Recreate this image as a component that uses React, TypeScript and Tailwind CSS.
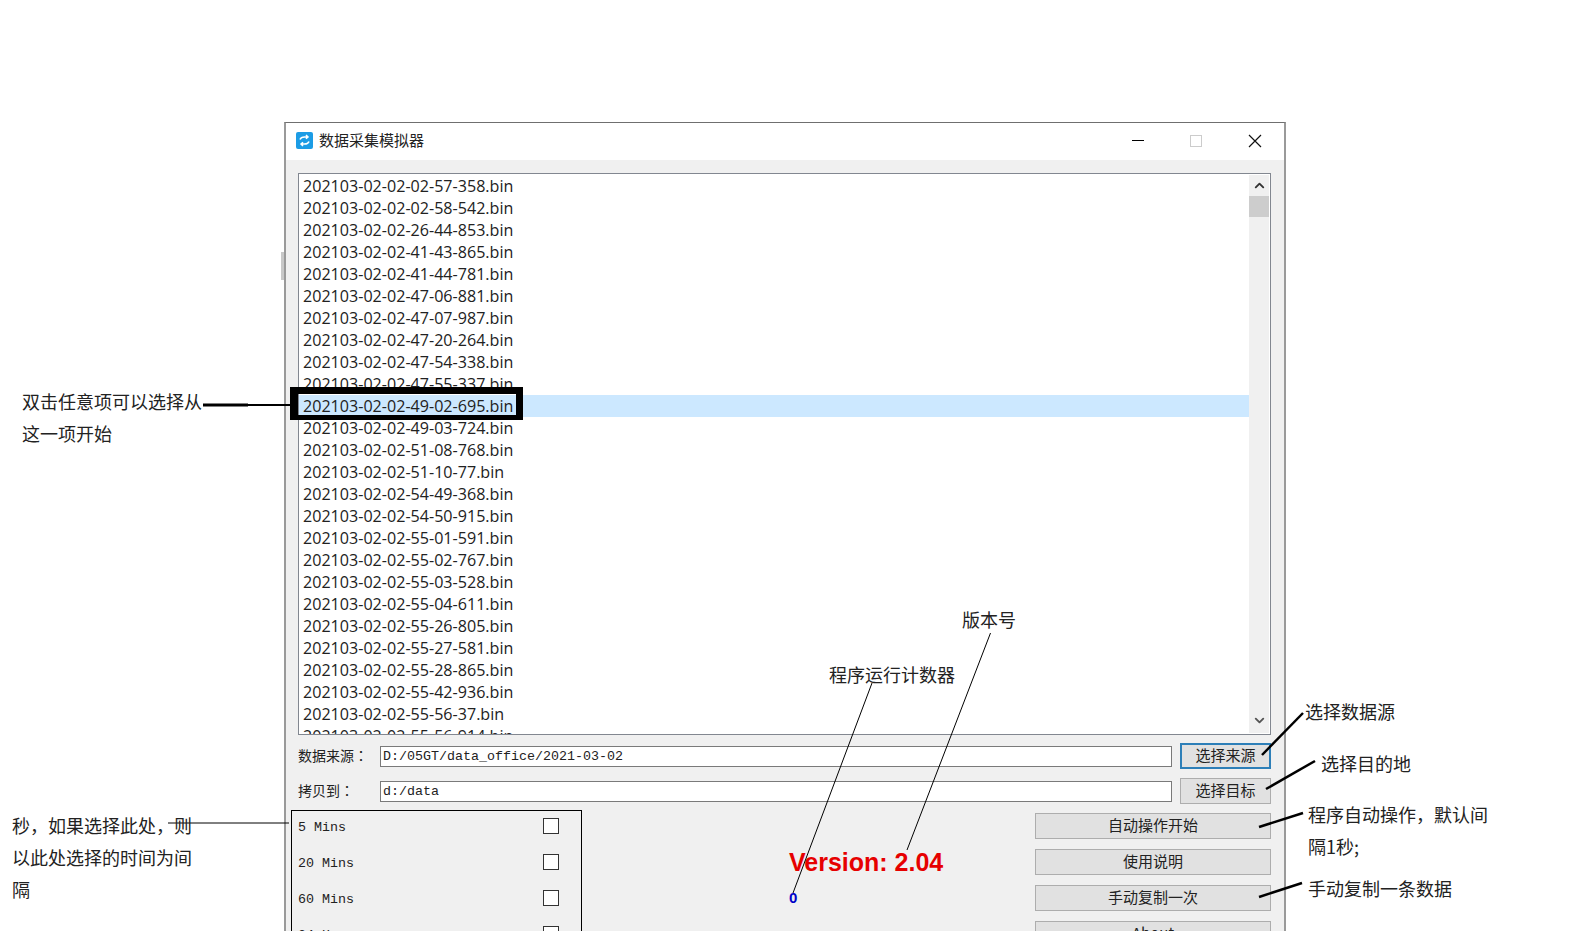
import { ChevronDown, ChevronUp } from "lucide-react";

const files = [
  "202103-02-02-02-57-358.bin",
  "202103-02-02-02-58-542.bin",
  "202103-02-02-26-44-853.bin",
  "202103-02-02-41-43-865.bin",
  "202103-02-02-41-44-781.bin",
  "202103-02-02-47-06-881.bin",
  "202103-02-02-47-07-987.bin",
  "202103-02-02-47-20-264.bin",
  "202103-02-02-47-54-338.bin",
  "202103-02-02-47-55-337.bin",
  "202103-02-02-49-02-695.bin",
  "202103-02-02-49-03-724.bin",
  "202103-02-02-51-08-768.bin",
  "202103-02-02-51-10-77.bin",
  "202103-02-02-54-49-368.bin",
  "202103-02-02-54-50-915.bin",
  "202103-02-02-55-01-591.bin",
  "202103-02-02-55-02-767.bin",
  "202103-02-02-55-03-528.bin",
  "202103-02-02-55-04-611.bin",
  "202103-02-02-55-26-805.bin",
  "202103-02-02-55-27-581.bin",
  "202103-02-02-55-28-865.bin",
  "202103-02-02-55-42-936.bin",
  "202103-02-02-55-56-37.bin",
  "202103-02-02-55-56-914.bin",
];

const cjk = "font-['Noto_Sans_CJK_SC',sans-serif]";
const mono = "font-['Liberation_Mono','Noto_Sans_CJK_SC',monospace]";

function Note({ className, children }: { className: string; children: string }) {
  return (
    <span
      className={`absolute text-[18px] leading-[24px] whitespace-nowrap text-[#222] ${cjk} ${className}`}
    >
      {children}
    </span>
  );
}

function PathRow({ label, value, top }: { label: string; value: string; top: string }) {
  return (
    <div className={`flex items-center h-[21px] ${top}`}>
      <span className="w-[82px] pb-[2px] text-[14px] text-[#222] font-['Noto_Sans_CJK_TC',sans-serif]">{label}</span>
      <div
        className={`w-[792px] h-[21px] bg-white border border-[#7a7a7a] pl-[2px] text-[13.33px] leading-[19px] text-[#222] ${mono}`}
      >
        {value}
      </div>
    </div>
  );
}

function Button({ label, className }: { label: string; className: string }) {
  return (
    <button
      className={`flex items-center justify-center pb-[1px] bg-[#e1e1e1] border border-[#adadad] text-[15px] text-[#222] ${cjk} ${className}`}
    >
      {label}
    </button>
  );
}

function Interval({ label }: { label: string }) {
  return (
    <div className="flex items-center justify-between h-[36px] pl-[5px] pr-[22px] shrink-0">
      <span className={`text-[13.33px] text-[#222] ${mono}`}>{label}</span>
      <span className="w-[16px] h-[16px] mb-[4px] bg-white border border-[#333]" />
    </div>
  );
}

export default function App() {
  return (
    <div className="relative h-[931px] overflow-hidden bg-white pt-[122px] pl-[284px]">
      {/* window */}
      <div className="w-[1002px] h-[809px] border-x-2 border-t border-x-[#9a9a9a] border-t-[#6f6f6f] bg-[#f0f0f0]">
        <div className="h-[37px] bg-white flex items-center pl-[10px] pb-[2px]">
          <svg width="17" height="17" viewBox="0 0 17 17" aria-hidden="true">
            <rect width="17" height="17" rx="2" fill="#1c9ce5" />
            <path d="M4 7.5c.6-1.8 2-2.6 4.5-2.6h3M10 3l2 1.9-2 1.9M13 9.5c-.6 1.8-2 2.6-4.5 2.6h-3M7 14l-2-1.9 2-1.9" fill="none" stroke="#fff" strokeWidth="1.5" />
          </svg>
          <span className={`ml-[6px] text-[15px] text-[#222] ${cjk}`}>数据采集模拟器</span>
          <div className="ml-auto flex items-center">
            <span className="w-[12px] h-[1px] bg-black" />
            <span className="ml-[46px] w-[12px] h-[12px] border border-[#ccc]" />
            <svg className="ml-[46px] mr-[22px]" width="14" height="14" viewBox="0 0 14 14" aria-hidden="true">
              <path d="M1 1l12 12M13 1L1 13" stroke="#111" strokeWidth="1.2" />
            </svg>
          </div>
        </div>

        <div className="pl-[12px] pt-[13px]">
          {/* file list */}
          <div className="relative w-[973px] h-[562px] bg-white border border-[#828790] overflow-hidden pt-[1px]">
            {files.map((f) => (
              <div
                key={f}
                className={`h-[22px] w-[950px] pl-[4px] text-[16.1px] leading-[22px] text-[#222] font-['Open_Sans',sans-serif] ${f.includes("49-02-695") ? "bg-[#cce8ff]" : ""}`}
              >
                {f}
              </div>
            ))}
            <div className="absolute top-[1px] right-[1px] bottom-[1px] w-[20px] bg-[#f0f0f0] flex flex-col items-center">
              <ChevronUp className="h-[21px] w-[15px] text-[#333] shrink-0" strokeWidth={3} />
              <div className="h-[21px] w-full bg-[#cdcdcd]" />
              <ChevronDown className="mt-auto mb-[2px] h-[21px] w-[15px] text-[#555] shrink-0" strokeWidth={3} />
            </div>
          </div>

          {/* paths */}
          <div className="flex mt-[8px] w-[973px]">
            <div className="flex flex-col pt-[3px]">
              <PathRow label="数据来源：" value="D:/05GT/data_office/2021-03-02" top="" />
              <PathRow label="拷贝到：" value="d:/data" top="mt-[14px]" />
            </div>
            <div className="ml-auto flex flex-col">
              <Button label="选择来源" className="w-[91px] h-[26px] !border-2 !border-[#2d7fb8]" />
              <Button label="选择目标" className="w-[91px] h-[26px] mt-[9px]" />
            </div>
          </div>

          <div className="flex w-[973px] mt-[6px]">
            {/* interval group */}
            <div className="-ml-[7px] w-[291px] h-[200px] border border-black flex flex-col overflow-hidden shrink-0">
              <div className="-mt-[1px] pl-[1px]">
                <Interval label="5 Mins" />
                <Interval label="20 Mins" />
                <Interval label="60 Mins" />
                <Interval label="24 Hours" />
              </div>
            </div>
            <div className="ml-[207px] flex flex-col pt-[36px]">
              <span className="text-[25px] leading-[32px] font-bold text-[#e60000] whitespace-nowrap font-['Liberation_Sans',sans-serif]">
                Version: 2.04
              </span>
              <span className="mt-[11px] text-[15px] leading-[17px] font-bold text-[#0000c8] font-['Liberation_Sans',sans-serif]">
                0
              </span>
            </div>
            <div className="ml-auto flex flex-col gap-[10px] pt-[3px]">
              <Button label="自动操作开始" className="w-[236px] h-[26px]" />
              <Button label="使用说明" className="w-[236px] h-[26px]" />
              <Button label="手动复制一次" className="w-[236px] h-[26px]" />
              <Button label="About" className="w-[236px] h-[26px]" />
            </div>
          </div>
        </div>
      </div>

      {/* callouts over the window */}
      <div className="absolute inset-0 pointer-events-none">
        <div className="absolute left-[281px] top-[252px] w-[3px] h-[28px] bg-[#c8c8c8]" />
        <div className="absolute left-[290px] top-[387px] w-[233px] h-[33px] border-t-[7px] border-b-[5px] border-l-[8px] border-r-[7px] border-black" />
        <svg className="absolute inset-0" width="1570" height="931" aria-hidden="true">
          <path d="M203 405H248" stroke="#000" strokeWidth="3" />
          <path d="M248 405H291" stroke="#000" strokeWidth="2" />
          <path d="M168 823H289" stroke="#000" strokeWidth="1" />
          <path d="M872 683L793 893" stroke="#000" strokeWidth="1" />
          <path d="M990.5 633L907 850" stroke="#000" strokeWidth="1" />
          <path d="M1303 713L1262 755" stroke="#000" strokeWidth="2.5" />
          <path d="M1315 761L1266 789" stroke="#000" strokeWidth="2.5" />
          <path d="M1303 813L1259 827" stroke="#000" strokeWidth="2.5" />
          <path d="M1302 883L1259 897" stroke="#000" strokeWidth="2.5" />
        </svg>
        <Note className="left-[22px] top-[389px]">双击任意项可以选择从</Note>
        <Note className="left-[22px] top-[421px]">这一项开始</Note>
        <Note className="left-[12px] top-[813px]">秒，如果选择此处，则</Note>
        <Note className="left-[12px] top-[845px]">以此处选择的时间为间</Note>
        <Note className="left-[12px] top-[877px]">隔</Note>
        <Note className="left-[962px] top-[607px]">版本号</Note>
        <Note className="left-[829px] top-[662px]">程序运行计数器</Note>
        <Note className="left-[1305px] top-[699px]">选择数据源</Note>
        <Note className="left-[1321px] top-[751px]">选择目的地</Note>
        <Note className="left-[1308px] top-[802px]">程序自动操作，默认间</Note>
        <Note className="left-[1308px] top-[834px]">隔1秒;</Note>
        <Note className="left-[1308px] top-[876px]">手动复制一条数据</Note>
      </div>
    </div>
  );
}
